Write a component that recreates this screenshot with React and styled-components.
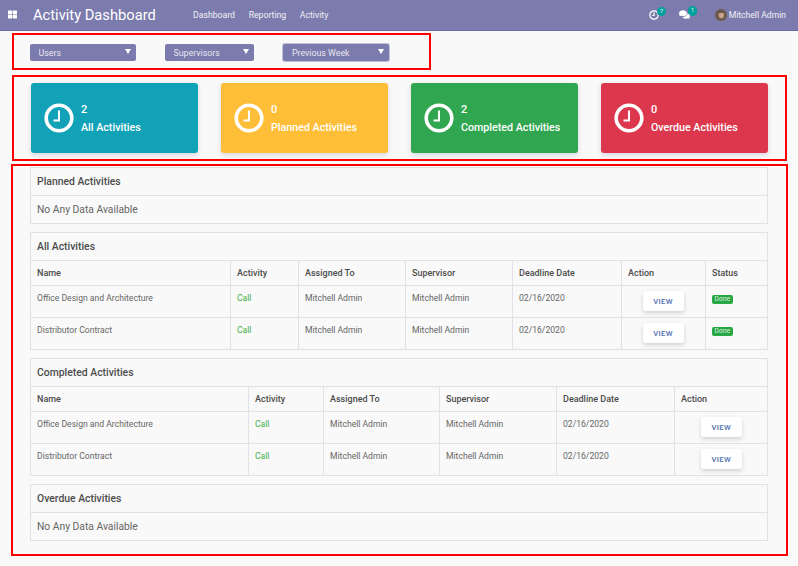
import React from "react";
import styled, { createGlobalStyle } from "styled-components";
import { FaThLarge, FaComments } from "react-icons/fa";

const GlobalStyle = createGlobalStyle`
  html, body {
    margin: 0;
    padding: 0;
    background: #f9f9f9;
    font-family: Roboto, "Liberation Sans", sans-serif;
    color: #666;
  }
  * { box-sizing: border-box; }
`;

const Navbar = styled.header`
  display: flex;
  align-items: center;
  height: 31px;
  padding: 0 12px 1px 8px;
  background: #7c7bad;
  border-bottom: 1px solid #6a69a0;
  color: #fff;
`;

const AppsButton = styled.span`
  display: flex;
  width: 25px;
  font-size: 9px;
`;

const Brand = styled.span`
  width: 160px;
  font-size: 14.7px;
`;

const NavLink = styled.a`
  margin-right: 13.6px;
  font-size: 8.7px;
  color: #f1f1f7;
`;

const NavRight = styled.div`
  display: flex;
  align-items: center;
  margin-left: auto;
`;

const NavIcon = styled.span`
  position: relative;
  display: flex;
  margin-right: ${(props) => props.$gap}px;
  font-size: 11px;
`;

const Badge = styled.span`
  position: absolute;
  top: -3px;
  left: ${(props) => props.$left}px;
  width: 9.5px;
  height: 9.5px;
  border-radius: 50%;
  background: #00a09d;
  font-size: 5.5px;
  line-height: 9.5px;
  text-align: center;
`;

const UserName = styled.span`
  margin-left: 2px;
  font-size: 8.6px;
  color: #f1f1f7;
`;

const FilterBar = styled.section`
  display: flex;
  gap: 29px;
  align-items: center;
  width: 419px;
  height: 37px;
  margin: 2px 0 0 12px;
  padding: 2px 16px 0;
  border: 2px solid #f00;
`;

const SelectWrap = styled.div`
  position: relative;
  width: ${(props) => props.$width}px;

  &::after {
    content: "";
    position: absolute;
    top: 5px;
    right: 5px;
    border-style: solid;
    border-width: 5px 3px 0;
    border-color: #fff transparent transparent;
    pointer-events: none;
  }
`;

const Select = styled.select`
  display: block;
  width: 100%;
  height: 17px;
  padding: 0 0 0 ${(props) => (props.$focused ? 9 : 8.5)}px;
  border: 0;
  border-radius: 2px;
  outline: none;
  appearance: none;
  background: #7c7bad;
  color: #e6e6f0;
  font-family: inherit;
  font-size: 8.8px;
  box-shadow: ${(props) => (props.$focused ? "0 0 0 1px #c0c0da" : "none")};
`;

const CardBar = styled.section`
  display: grid;
  grid-template-columns: repeat(4, 167px);
  gap: 23px;
  width: 775px;
  height: 86px;
  margin: 5px 0 0 12px;
  padding: 6px 0 0 17px;
  border: 2px solid #f00;
`;

const Card = styled.div`
  display: flex;
  align-items: center;
  gap: 7px;
  height: 70px;
  padding: 0 13px;
  border-radius: 3px;
  background: ${(props) => props.$color};
  color: #fff;
  box-shadow: 0 2px 5px rgba(90, 90, 140, 0.22);
`;

const CardText = styled.div`
  padding-top: 2px;
  font-size: 10.7px;
  font-weight: 500;
  line-height: 18px;
`;

const CardCount = styled.div`
  font-size: 11px;
`;

const Content = styled.main`
  display: flex;
  flex-direction: column;
  gap: 8px;
  width: 777px;
  height: 392px;
  margin: 3px 0 0 11px;
  padding: 1px 18px 0 17px;
  border: 2px solid #f00;
`;

const Panel = styled.div`
  border: 1px solid #dee2e6;
`;

const PanelTitle = styled.h3`
  height: 27px;
  margin: 0;
  padding: 0 6px;
  font-size: 10.4px;
  font-weight: 500;
  line-height: 27px;
  color: #4c4c4c;
`;

const EmptyText = styled.div`
  height: 28px;
  padding: 0 6px;
  border-top: 1px solid #dee2e6;
  font-size: 10.3px;
  line-height: 27px;
`;

const Table = styled.table`
  width: 100%;
  border-collapse: collapse;
  table-layout: fixed;
`;

const HeadCell = styled.th`
  height: 25px;
  padding: 0 6.5px;
  border: 1px solid #dee2e6;
  font-size: 9px;
  font-weight: 500;
  text-align: left;
  color: #4c4c4c;

  &:first-child { border-left: 0; padding-left: 6px; }
  &:last-child { border-right: 0; }
`;

const Cell = styled.td`
  height: 32px;
  padding: 7px 6.5px 0;
  border: 1px solid #dee2e6;
  font-size: 8.6px;
  line-height: 11px;
  vertical-align: top;
  color: ${(props) => props.$color || "#666"};

  tr:last-child > & { border-bottom: 0; height: 31.5px; }
  &:first-child { border-left: 0; padding-left: 6px; }
  &:last-child { border-right: 0; }
`;

const ActionCell = styled(Cell)`
  padding-top: 5px;
  text-align: center;
`;

const ViewButton = styled.button`
  width: 41px;
  height: 20px;
  padding: 0;
  border: 0;
  border-radius: 3px;
  background: #fff;
  box-shadow: 0 2px 4px rgba(0, 0, 0, 0.16);
  color: #4f6fb0;
  font-family: inherit;
  font-size: 7.6px;
  font-weight: 500;
  letter-spacing: 0.4px;
`;

const StatusBadge = styled.span`
  display: inline-block;
  margin-top: 2px;
  padding: 0 2.5px;
  border-radius: 2px;
  background: #28a745;
  color: #d8f0dd;
  font-size: 6.8px;
  line-height: 9px;
`;

const ClockIcon = () => (
  <svg width="30" height="30" viewBox="0 0 30 30" fill="none" stroke="#fff">
    <circle cx="15" cy="15" r="12.8" strokeWidth="3.6" />
    <path d="M15 7.5v10H9.5" strokeWidth="2" />
  </svg>
);

const NavClock = () => (
  <svg width="10" height="10" viewBox="0 0 10 10" fill="none" stroke="#fff" strokeWidth="1.2">
    <circle cx="5" cy="5" r="4.2" />
    <path d="M5 2.5v3H3.2" />
  </svg>
);

const Avatar = () => (
  <svg width="12" height="12" viewBox="0 0 12 12">
    <circle cx="6" cy="6" r="6" fill="#6d5a4c" />
    <ellipse cx="6.3" cy="6" rx="2.6" ry="3.2" fill="#c9a48c" />
    <path d="M3.5 4.5C4 2 8 1.5 9 4.2L8 3.8C6.5 3 5 3.4 3.5 4.5Z" fill="#3e2f27" />
  </svg>
);

const cards = [
  { count: 2, label: "All Activities", color: "#11a2b8" },
  { count: 0, label: "Planned Activities", color: "#ffbe38" },
  { count: 2, label: "Completed Activities", color: "#2fa64f" },
  { count: 0, label: "Overdue Activities", color: "#dd374d" },
];

const rows = ["Office Design and Architecture", "Distributor Contract"];

const ActivityTable = ({ widths, showStatus }) => {
  const heads = ["Name", "Activity", "Assigned To", "Supervisor", "Deadline Date", "Action"];
  if (showStatus) heads.push("Status");
  return (
    <Table>
      <colgroup>
        {widths.map((w, i) => (
          <col key={i} width={w} />
        ))}
      </colgroup>
      <thead>
        <tr>
          {heads.map((h) => (
            <HeadCell key={h}>{h}</HeadCell>
          ))}
        </tr>
      </thead>
      <tbody>
        {rows.map((name) => (
          <tr key={name}>
            <Cell>{name}</Cell>
            <Cell $color="#46ad4c">Call</Cell>
            <Cell>Mitchell Admin</Cell>
            <Cell>Mitchell Admin</Cell>
            <Cell>02/16/2020</Cell>
            <ActionCell>
              <ViewButton>VIEW</ViewButton>
            </ActionCell>
            {showStatus && (
              <Cell>
                <StatusBadge>Done</StatusBadge>
              </Cell>
            )}
          </tr>
        ))}
      </tbody>
    </Table>
  );
};

const App = () => (
  <>
    <GlobalStyle />
    <Navbar>
      <AppsButton>
        <FaThLarge />
      </AppsButton>
      <Brand>Activity Dashboard</Brand>
      <NavLink>Dashboard</NavLink>
      <NavLink>Reporting</NavLink>
      <NavLink>Activity</NavLink>
      <NavRight>
        <NavIcon $gap={20}>
          <NavClock />
          <Badge $left={8}>7</Badge>
        </NavIcon>
        <NavIcon $gap={25}>
          <FaComments />
          <Badge $left={9}>1</Badge>
        </NavIcon>
        <Avatar />
        <UserName>Mitchell Admin</UserName>
      </NavRight>
    </Navbar>

    <FilterBar>
      <SelectWrap $width={106}>
        <Select defaultValue="Users">
          <option>Users</option>
        </Select>
      </SelectWrap>
      <SelectWrap $width={89}>
        <Select defaultValue="Supervisors">
          <option>Supervisors</option>
        </Select>
      </SelectWrap>
      <SelectWrap $width={106}>
        <Select $focused defaultValue="Previous Week">
          <option>Previous Week</option>
        </Select>
      </SelectWrap>
    </FilterBar>

    <CardBar>
      {cards.map((card) => (
        <Card key={card.label} $color={card.color}>
          <ClockIcon />
          <CardText>
            <CardCount>{card.count}</CardCount>
            {card.label}
          </CardText>
        </Card>
      ))}
    </CardBar>

    <Content>
      <Panel>
        <PanelTitle>Planned Activities</PanelTitle>
        <EmptyText>No Any Data Available</EmptyText>
      </Panel>
      <Panel>
        <PanelTitle>All Activities</PanelTitle>
        <ActivityTable widths={[199, 68, 107, 107, 109, 84, 63]} showStatus />
      </Panel>
      <Panel>
        <PanelTitle>Completed Activities</PanelTitle>
        <ActivityTable widths={[217, 75, 116, 117, 118, 94]} />
      </Panel>
      <Panel>
        <PanelTitle>Overdue Activities</PanelTitle>
        <EmptyText>No Any Data Available</EmptyText>
      </Panel>
    </Content>
  </>
);

export default App;
